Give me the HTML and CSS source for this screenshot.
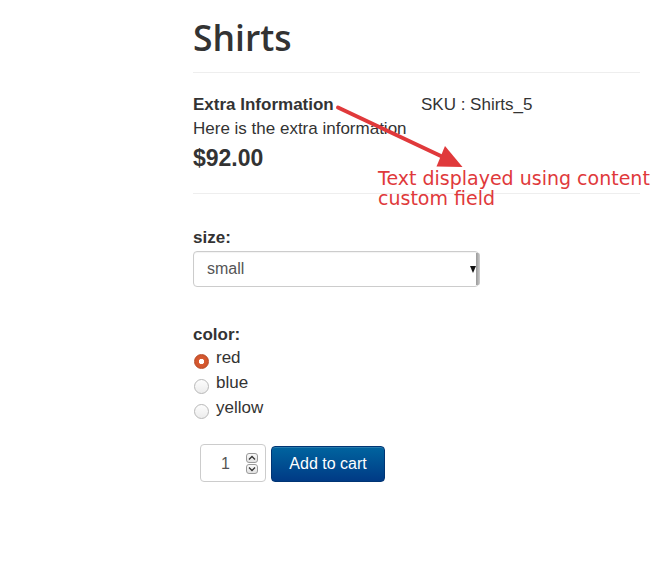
FILE: index.html
```html
<!DOCTYPE html>
<html>
<head>
<meta charset="utf-8">
<link rel="stylesheet" href="styles.css">
</head>
<body>
<div class="page">
  <div class="product">
    <h1 class="title">Shirts</h1>
    <div class="info">
      <div class="info-main">
        <div class="extra-title">Extra Information</div>
        <div class="extra-text">Here is the extra information</div>
        <div class="price">$92.00</div>
      </div>
      <div class="sku">SKU : Shirts_5</div>
    </div>
    <div class="options">
      <div class="field-label">size:</div>
      <div class="select">
        <span class="select-value">small</span>
        <span class="select-arrow"></span>
      </div>
      <div class="field-label color-label">color:</div>
      <div class="radios">
        <div class="radio-row"><span class="radio checked"></span><span class="radio-label">red</span></div>
        <div class="radio-row"><span class="radio"></span><span class="radio-label">blue</span></div>
        <div class="radio-row"><span class="radio"></span><span class="radio-label">yellow</span></div>
      </div>
    </div>
    <div class="cart">
      <div class="qty">
        <span class="qty-value">1</span>
        <span class="spinner">
          <span class="spin-btn">
            <svg width="8" height="6" viewBox="0 0 8 6"><path d="M1 4.5 L4 1.5 L7 4.5" fill="none" stroke="#333" stroke-width="1.3"/></svg>
          </span>
          <span class="spin-btn">
            <svg width="8" height="6" viewBox="0 0 8 6"><path d="M1 1.5 L4 4.5 L7 1.5" fill="none" stroke="#333" stroke-width="1.3"/></svg>
          </span>
        </span>
      </div>
      <button class="add-btn">Add to cart</button>
    </div>
  </div>
  <svg class="arrow" width="660" height="565" viewBox="0 0 660 565">
    <line x1="338" y1="107.5" x2="443" y2="157" stroke="#e0393b" stroke-width="4" stroke-linecap="round"/>
    <polygon points="445,146 436.5,166.5 462.5,167" fill="#e0393b"/>
  </svg>
  <div class="note">Text displayed using content<br>custom field</div>
</div>
</body>
</html>
```
FILE: styles.css
```css
html, body {
  margin: 0;
  padding: 0;
  background: #fff;
}

body {
  font-family: "Liberation Sans", Arial, sans-serif;
  font-size: 17px;
  color: #333;
}

.page {
  position: relative;
  width: 660px;
  height: 565px;
  overflow: hidden;
}

.product {
  margin-left: 193px;
  width: 447px;
}

.title {
  margin: 0;
  padding: 17px 0 15px;
  font-family: "Open Sans", sans-serif;
  font-weight: 600;
  font-size: 35.5px;
  line-height: 40px;
  color: #333;
  border-bottom: 1px solid #eee;
}

.info {
  display: flex;
  padding-top: 22px;
  padding-bottom: 21px;
  border-bottom: 1px solid #eee;
}

.info-main {
  width: 228px;
  flex: none;
}

.extra-title {
  font-weight: bold;
  line-height: 20px;
}

.extra-text {
  margin-top: 4px;
  line-height: 20px;
}

.price {
  margin-top: 5px;
  font-size: 23px;
  font-weight: bold;
  line-height: 28px;
}

.sku {
  line-height: 20px;
}

.options {
  padding-top: 34px;
}

.field-label {
  font-weight: bold;
  line-height: 20px;
}

.select {
  margin-top: 3px;
  width: 286px;
  height: 36px;
  box-sizing: border-box;
  border: 1px solid #ccc;
  border-radius: 4px;
  padding: 7px 0 7px 13px;
  display: flex;
  align-items: flex-start;
  position: relative;
  box-shadow: inset 0 1px 1px rgba(0,0,0,0.05);
}

.select-value {
  font-size: 16px;
  line-height: 20px;
  color: #555;
}

.select-arrow {
  position: absolute;
  right: -2px;
  top: 1px;
  bottom: 1px;
  width: 4px;
  background: linear-gradient(to right, #9a9a9a 0, #b0b0b0 2px, #d0d0d0 4px);
  border-radius: 0 2px 2px 0;
}

.select-arrow::before {
  content: "";
  position: absolute;
  right: 4px;
  top: 13px;
  border-left: 3px solid transparent;
  border-right: 3px solid transparent;
  border-top: 7px solid #111;
}

.color-label {
  margin-top: 38px;
}

.radio-row {
  display: flex;
  align-items: flex-start;
  height: 25px;
  line-height: 25px;
}

.radio {
  flex: none;
  width: 15px;
  height: 15px;
  box-sizing: border-box;
  margin-top: 9px;
  margin-left: 1px;
  margin-right: 7px;
  border: 1px solid #b8b8b8;
  border-radius: 50%;
  background: linear-gradient(#fdfdfd, #ececec);
}

.radio.checked {
  border: 1px solid #b84a26;
  background: radial-gradient(circle, #fff 0, #fff 2.3px, #d85a30 3px, #c9512b 100%);
}

.radio-label {
  line-height: 25px;
}

.cart {
  display: flex;
  align-items: flex-end;
  margin-top: 24px;
  padding-left: 7px;
}

.qty {
  display: flex;
  align-items: center;
  width: 66px;
  height: 38px;
  box-sizing: border-box;
  border: 1px solid #ccc;
  border-radius: 4px;
  padding-left: 20px;
  padding-right: 7px;
}

.qty-value {
  font-size: 16px;
  line-height: 20px;
  color: #555;
  padding-top: 2px;
}

.spinner {
  margin-left: auto;
  display: flex;
  flex-direction: column;
  gap: 1px;
  margin-top: 1px;
}

.spin-btn {
  width: 12px;
  height: 10px;
  box-sizing: border-box;
  border: 1px solid #9a9a9a;
  border-radius: 3px;
  background: linear-gradient(#fafafa, #e2e2e2);
  display: flex;
  align-items: center;
  justify-content: center;
}

.add-btn {
  margin-left: 5px;
  width: 114px;
  height: 36px;
  box-sizing: border-box;
  border: 1px solid #003574;
  border-radius: 4px;
  background: linear-gradient(#00649f, #003a85);
  color: #fff;
  font-family: "Liberation Sans", Arial, sans-serif;
  font-size: 16px;
  line-height: 20px;
  padding: 0;
  box-shadow: inset 0 1px 0 rgba(255,255,255,0.15);
}

.arrow {
  position: absolute;
  left: 0;
  top: 0;
  pointer-events: none;
}

.note {
  position: absolute;
  left: 378px;
  top: 168px;
  font-family: "DejaVu Sans", sans-serif;
  font-size: 19px;
  line-height: 20px;
  color: #e0393b;
  white-space: nowrap;
}
```
